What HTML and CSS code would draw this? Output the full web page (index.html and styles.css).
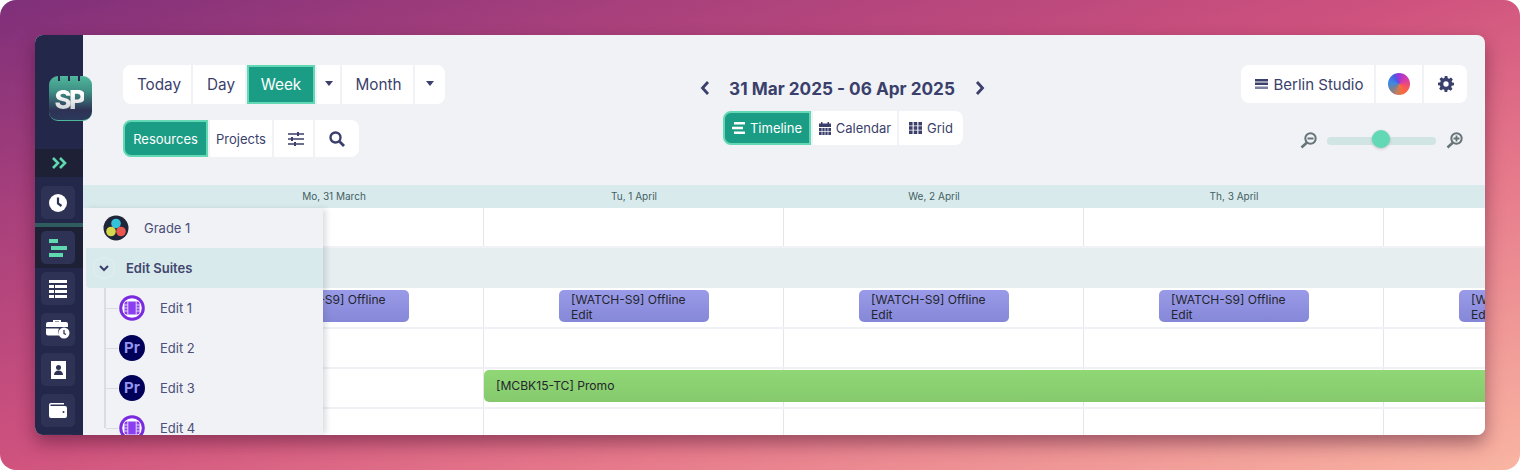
FILE: index.html
```html
<!DOCTYPE html>
<html lang="en">
<head>
<meta charset="utf-8">
<title>Schedule</title>
<link rel="stylesheet" href="styles.css">
</head>
<body>
<div class="stage">
<div class="app">
  <aside class="side">
    <div class="logo"><span class="rings"><i></i><i></i><i></i></span><span class="logo-text">SP</span></div>
    <div class="expand"><svg width="16" height="14" viewBox="0 0 16 14"><path d="M2 2l5 5-5 5M9 2l5 5-5 5" fill="none" stroke="#5fd8b0" stroke-width="2.6"/></svg></div>
    <div class="nav-first"><div class="nav"><svg width="20" height="20" viewBox="0 0 20 20"><circle cx="10" cy="10" r="9" fill="#fff"/><path d="M10 4.5V10.5L13.5 13" fill="none" stroke="#2e3255" stroke-width="2.2"/></svg></div></div>
    <div class="sep"></div>
    <div class="nav-active"><div class="nav"><svg width="20" height="18" viewBox="0 0 20 18"><rect x="1" y="0" width="9" height="4" fill="#5fd8b0"/><rect x="3" y="7" width="16" height="4" fill="#5fd8b0"/><rect x="1" y="14" width="14" height="4" fill="#5fd8b0"/></svg></div></div>
    <div class="nav-list">
      <div class="nav"><svg width="20" height="18" viewBox="0 0 20 18"><path d="M1 0h18v3H1zM1 5h5v3H1zM7 5h12v3H7zM1 10h5v3H1zM7 10h12v3H7zM1 15h5v3H1zM7 15h12v3H7z" fill="#fff"/></svg></div>
      <div class="nav"><svg width="24" height="20" viewBox="0 0 24 20"><path d="M7 3V1h8v2h5a2 2 0 0 1 2 2v3H0V5a2 2 0 0 1 2-2zM9 3h4V2.500H9zM0 9.500h13a7 7 0 0 0 .5 7H2a2 2 0 0 1-2-2z" fill="#fff"/><circle cx="18" cy="14" r="5.500" fill="#fff"/><path d="M18 11v3.500l2 1" fill="none" stroke="#2e3255" stroke-width="1.300"/></svg></div>
      <div class="nav"><svg width="15" height="18" viewBox="0 0 15 18"><path d="M0 0h15v18H0z" fill="#fff"/><circle cx="7.500" cy="6.500" r="2.500" fill="#2e3255"/><path d="M3 14c0-3 2-4.500 4.500-4.500S12 11 12 14z" fill="#2e3255"/></svg></div>
      <div class="nav"><svg width="18" height="16" viewBox="0 0 18 16"><path d="M2 1h13v1.500H2a.7.7 0 0 0 0 1.500h14a2 2 0 0 1 2 2v8a2 2 0 0 1-2 2H2a2 2 0 0 1-2-2V3a2 2 0 0 1 2-2z" fill="#fff"/><circle cx="14.500" cy="10" r="1" fill="#2e3255"/></svg></div>
      <div class="nav"></div>
    </div>
  </aside>

  <main class="main">
    <header class="top">
      <div class="top-left">
        <div class="btns row-a">
          <button class="b b-today">Today</button>
          <button class="b b-day">Day</button>
          <button class="b b-week on">Week</button>
          <button class="b b-caret"><span class="caret"></span></button>
          <button class="b b-month">Month</button>
          <button class="b b-caret2"><span class="caret"></span></button>
        </div>
        <div class="btns row-b">
          <button class="b b-res on">Resources</button>
          <button class="b b-proj">Projects</button>
          <button class="b b-filter"><svg width="16" height="14" viewBox="0 0 16 14"><path d="M0 2h16M0 7h16M0 12h16" stroke="#3b3f6b" stroke-width="1.500"/><path d="M10 0v4M4 5v4M7 10v4" stroke="#3b3f6b" stroke-width="2"/></svg></button>
          <button class="b b-search"><svg width="16" height="16" viewBox="0 0 16 16"><circle cx="6.500" cy="6.500" r="5" fill="none" stroke="#3b3f6b" stroke-width="2.400"/><path d="M10.500 10.500L15 15" stroke="#3b3f6b" stroke-width="2.800"/></svg></button>
        </div>
      </div>
      <div class="top-center">
        <div class="date-row">
          <svg width="10" height="16" viewBox="0 0 10 16"><path d="M8 2L2.500 8 8 14" fill="none" stroke="#3b3f6b" stroke-width="2.800"/></svg>
          <span class="date">31 Mar 2025 - 06 Apr 2025</span>
          <svg width="10" height="16" viewBox="0 0 10 16"><path d="M2 2l5.500 6L2 14" fill="none" stroke="#3b3f6b" stroke-width="2.800"/></svg>
        </div>
        <div class="btns row-c">
          <button class="b b-time on"><svg width="13" height="12" viewBox="0 0 13 12"><path d="M2 0h11v2.400H2zM0 4.800h11v2.400H0zM2 9.600h11V12H2z" fill="#fff"/></svg>Timeline</button>
          <button class="b b-cal"><svg width="12" height="13" viewBox="0 0 12 13"><path d="M2 0h1.500v1.500h5V0H10v1.500h2V5H0V1.500h2zM0 6h12v7H0z" fill="#3b3f6b"/><path d="M3 6v7M6 6v7M9 6v7M0 9.500h12" stroke="#fff" stroke-width=".7"/></svg>Calendar</button>
          <button class="b b-grid"><svg width="13" height="12" viewBox="0 0 13 12"><path d="M0 0h3.600v3.500H0zM4.700 0h3.600v3.500H4.700zM9.400 0H13v3.500H9.400zM0 4.300h3.600v3.400H0zM4.700 4.300h3.600v3.400H4.700zM9.400 4.300H13v3.400H9.400zM0 8.500h3.600V12H0zM4.700 8.500h3.600V12H4.700zM9.400 8.500H13V12H9.400z" fill="#3b3f6b"/></svg>Grid</button>
        </div>
      </div>
      <div class="top-right">
        <div class="btns row-d">
          <button class="b b-studio"><svg width="13" height="10" viewBox="0 0 13 10"><path d="M0 0h13v2.400H0zM0 3.500h13v2.400H0z" fill="#3b3f6b"/><path d="M0 7.500h13v2.400H0z" fill="#7b7fa0"/></svg>Berlin Studio</button>
          <button class="b b-color"><span class="wheel"></span></button>
          <button class="b b-gear"><svg width="16" height="16" viewBox="0 0 24 24"><path fill-rule="evenodd" fill="#3b3f6b" d="M10 0h4l.7 3.400 1.900.8 2.900-1.900 2.800 2.800-1.900 2.900.8 1.900L24 10v4l-3.400.7-.8 1.900 1.900 2.900-2.800 2.800-2.900-1.900-1.900.8L14 24h-4l-.7-3.400-1.900-.8-2.900 1.900-2.800-2.800 1.900-2.900-.8-1.900L0 14v-4l3.400-.7.8-1.900-1.900-2.900 2.800-2.800 2.900 1.900 1.900-.8zM12 8a4 4 0 1 0 0 8 4 4 0 0 0 0-8z"/></svg></button>
        </div>
        <div class="zoom">
          <svg width="17" height="17" viewBox="0 0 17 17"><circle cx="10.500" cy="6.500" r="5.200" fill="none" stroke="#66757a" stroke-width="2"/><path d="M7.500 6.500h6" stroke="#66757a" stroke-width="1.800"/><path d="M7 10.500L1.500 15.500" stroke="#66757a" stroke-width="2.600"/></svg>
          <div class="track"><span class="thumb"></span></div>
          <svg width="17" height="17" viewBox="0 0 17 17"><circle cx="10.500" cy="6.500" r="5.200" fill="none" stroke="#66757a" stroke-width="2"/><path d="M7.500 6.500h6M10.500 3.500v6" stroke="#66757a" stroke-width="1.800"/><path d="M7 10.500L1.500 15.500" stroke="#66757a" stroke-width="2.600"/></svg>
        </div>
      </div>
    </header>

    <section class="timeline">
      <div class="days">
        <div class="day">Mo, 31 March</div>
        <div class="day">Tu, 1 April</div>
        <div class="day">We, 2 April</div>
        <div class="day">Th, 3 April</div>
        <div class="day">Fr, 4 April</div>
      </div>
      <div class="row"><i></i><i></i><i></i><i></i><i></i></div>
      <div class="row group"></div>
      <div class="row tall">
        <i></i><i></i><i></i><i></i><i></i>
        <div class="ev purple ev1">[WATCH-S9] Offline Edit</div>
        <div class="ev purple ev2">[WATCH-S9] Offline Edit</div>
        <div class="ev purple ev3">[WATCH-S9] Offline Edit</div>
        <div class="ev purple ev4">[WATCH-S9] Offline Edit</div>
        <div class="ev purple ev5">[WATCH-S9] Offline Edit</div>
      </div>
      <div class="row"><i></i><i></i><i></i><i></i><i></i></div>
      <div class="row"><i></i><i></i><i></i><i></i><i></i><div class="ev green">[MCBK15-TC] Promo</div></div>
      <div class="row"><i></i><i></i><i></i><i></i><i></i></div>

      <div class="panel">
        <div class="res res-top">
          <span class="ico"><svg width="26" height="26" viewBox="0 0 26 26"><circle cx="13" cy="13" r="12.500" fill="#20263a"/><circle cx="13" cy="8.500" r="4.800" fill="#35c3dc"/><circle cx="8" cy="16.500" r="4.800" fill="#d5d84a"/><circle cx="18" cy="16.500" r="4.800" fill="#e9574f"/></svg></span>
          <span>Grade 1</span>
        </div>
        <div class="res group-head">
          <span class="chev"><svg width="10" height="7" viewBox="0 0 10 7"><path d="M1 1l4 4 4-4" fill="none" stroke="#3b3f6b" stroke-width="2"/></svg></span>
          <span>Edit Suites</span>
        </div>
        <div class="tree">
          <div class="res child"><span class="ico"><svg width="26" height="26" viewBox="0 0 26 26"><circle cx="13" cy="13" r="11.300" fill="#fff" stroke="#7a2be0" stroke-width="3"/><rect x="5.500" y="6.500" width="15" height="13" rx="2" fill="#8a3ff0"/><path d="M8.800 6.500v13M17.200 6.500v13M5.500 10h3.300M5.500 13h3.300M5.500 16h3.300M17.200 10h3.300M17.200 13h3.300M17.200 16h3.300" stroke="#f1e6fd" stroke-width=".9"/></svg></span><span>Edit 1</span></div>
          <div class="res child"><span class="ico pr">Pr</span><span>Edit 2</span></div>
          <div class="res child"><span class="ico pr">Pr</span><span>Edit 3</span></div>
          <div class="res child"><span class="ico"><svg width="26" height="26" viewBox="0 0 26 26"><circle cx="13" cy="13" r="11.300" fill="#fff" stroke="#7a2be0" stroke-width="3"/><rect x="5.500" y="6.500" width="15" height="13" rx="2" fill="#8a3ff0"/><path d="M8.800 6.500v13M17.200 6.500v13M5.500 10h3.300M5.500 13h3.300M5.500 16h3.300M17.200 10h3.300M17.200 13h3.300M17.200 16h3.300" stroke="#f1e6fd" stroke-width=".9"/></svg></span><span>Edit 4</span></div>
        </div>
      </div>
    </section>
  </main>
</div>
</div>
</body>
</html>
```

FILE: styles.css
```css
* { box-sizing: border-box; }
html, body { margin: 0; padding: 0; background: #fff; }
body { font-family: Inter, "Liberation Sans", sans-serif; width: 1520px; height: 470px; overflow: hidden; }
.stage {
  width: 1520px; height: 470px; padding: 35px; border-radius: 16px;
  background: linear-gradient(162deg, #7f2f7a 0%, #a8407c 22%, #cf527e 48%, #e5778a 68%, #f9b5a2 100%);
}
.app {
  width: 1450px; height: 400px; display: flex; overflow: hidden; border-radius: 8px;
  background: #f0f2f6; box-shadow: 0 8px 18px rgba(60, 10, 40, .45);
}

/* sidebar */
.side { width: 48px; flex: none; background: #23274a; display: flex; flex-direction: column; position: relative; z-index: 3; padding-top: 41px; }
.logo {
  position: relative; width: 43px; height: 45px; margin-left: 13.500px; flex: none; border-radius: 9px;
  background: linear-gradient(180deg, #4fb79b 0%, #3f8f85 35%, #2e3255 78%, #2b3a5a 100%);
  border-bottom: 1px solid #4fb79b; display: flex; align-items: center; justify-content: center;
}
.rings { position: absolute; top: -1px; left: 9px; display: flex; gap: 8px; }
.rings i { width: 2px; height: 6px; background: #23274a; display: block; }
.logo-text {
  font-weight: 800; font-size: 26px; letter-spacing: -2.500px; margin: 3px 2px 0 0;
  background: linear-gradient(180deg, #fff 30%, #bfc4c8 100%); -webkit-background-clip: text; background-clip: text; color: transparent;
}
.expand { height: 28px; margin-top: 28px; background: #1e2136; display: flex; align-items: center; justify-content: center; flex: none; }
.nav { width: 34px; height: 33px; border-radius: 5px; background: #2e3255; display: flex; align-items: center; justify-content: center; flex: none; }
.nav-first { padding: 9px 0 0 6px; }
.sep { height: 4px; background: #2f5d5f; margin-top: 4px; flex: none; }
.nav-active { padding: 4px 0 4px 6px; background: #1e2136; }
.nav-list { display: flex; flex-direction: column; gap: 7.500px; padding: 4px 0 0 6px; }

/* main */
.main { flex: 1; min-width: 0; display: flex; flex-direction: column; }
.top { height: 150px; flex: none; display: flex; justify-content: space-between; padding: 30px 18px 0 40px; }
.top-left { display: flex; flex-direction: column; gap: 16px; align-items: flex-start; }
.top-center { display: flex; flex-direction: column; align-items: center; margin-top: 11px; width: 287px; }
.top-right { display: flex; flex-direction: column; align-items: flex-end; }
.btns { display: flex; gap: 2px; border-radius: 8px; }
.b {
  border: 0; background: #fff; color: #3b3f6b; font: 400 15.300px Inter, "Liberation Sans", sans-serif;
  display: flex; align-items: center; justify-content: center; padding: 0; gap: 5px; white-space: nowrap;
}
.b:first-child { border-radius: 8px 0 0 8px; }
.b:last-child { border-radius: 0 8px 8px 0; }
.b.on { background: #1b9c85; color: #fff; border: 2px solid #63d8b4; }
.row-a { height: 39px; }
.b-today { width: 68px; padding-left: 4px; }
.b-day { width: 52px; padding-left: 4px; }
.b-week { width: 68px; }
.b-caret { width: 23px; }
.b-month { width: 71px; padding-left: 2px; }
.b-caret2 { width: 30px; }
.caret { width: 0; height: 0; border-left: 4.500px solid transparent; border-right: 4.500px solid transparent; border-top: 5px solid #3b3f6b; margin-top: -2px; }
.row-b { height: 37px; }
.row-b .b { font-size: 13px; }
.b-res { width: 85px; }
.b-proj { width: 62px; }
.b-filter { width: 39px; padding-left: 4px; }
.b-search { width: 44px; }

.date-row { display: flex; align-items: center; justify-content: space-between; width: 287px; height: 24px; padding: 0 2px 0 0; }
.date { font-weight: 700; font-size: 17.200px; color: #3b3f6b; }
.row-c { height: 34px; margin-top: 11px; }
.row-c .b { font-size: 13px; }
.b-time { width: 88px; }
.b-cal { width: 84px; }
.b-grid { width: 64px; }

.row-d { height: 38px; }
.b-studio { width: 133px; gap: 6px; padding-left: 3px; font-size: 15px; }
.b-color { width: 46px; }
.b-gear { width: 43px; }
.wheel {
  width: 22px; height: 22px; border-radius: 50%; display: block;
  background: conic-gradient(#9c35d8 0deg, #d13ab0 50deg, #f0506e 100deg, #ff6a3a 150deg, #c87c5c 190deg, #7a7f90 230deg, #3b8ae8 280deg, #4a5ae0 330deg, #9c35d8 360deg);
}
.zoom { display: flex; align-items: center; gap: 10px; margin-top: 29px; padding-right: 4px; }
.track {
  width: 109px; height: 8px; border-radius: 4px; position: relative;
  background: radial-gradient(circle, #c3dcd8 .6px, transparent .8px) 0 0 / 2px 2px, #dcecec;
}
.thumb { position: absolute; left: 44.500px; top: -6.500px; width: 18px; height: 18px; border-radius: 50%; background: #63d8b4; box-shadow: 0 1px 3px rgba(0, 0, 0, .2); }

/* timeline */
.timeline { flex: 1; position: relative; overflow: hidden; min-height: 0; background: #fff; }
.days { height: 23px; background: #d9eaec; display: flex; margin-left: 101px; box-shadow: -101px 0 0 #d9eaec; }
.day { width: 300px; flex: none; text-align: center; font-size: 10px; line-height: 23px; color: #3f5f62; }
.row { height: 40px; display: flex; margin-left: 101px; position: relative; border-bottom: 2px solid #f0f1f5; box-shadow: -101px 0 0 #fff; }
.row.tall { height: 41px; }
.row i { width: 300px; flex: none; border-right: 1px solid #e4e6ea; }
.row.group { background: #e6eef0; box-shadow: -101px 0 0 #e6eef0; border-bottom: 0; }
.ev { position: absolute; color: #23252e; font-size: 12.100px; line-height: 15px; padding: 2px 12px 0; overflow: hidden; }
.purple { top: 2px; width: 150px; height: 32px; border-radius: 5px; background: linear-gradient(180deg, #9a9be8, #8587d8); }
.ev1 { left: 75px; }
.ev2 { left: 375px; }
.ev3 { left: 675px; }
.ev4 { left: 975px; }
.ev5 { left: 1275px; }
.green { top: 1px; left: 300px; width: 1200px; height: 32px; border-radius: 5px; background: linear-gradient(180deg, #90d776, #85c96c); line-height: 28px; }

.panel {
  position: absolute; left: 0; top: 23px; width: 240px; bottom: 0; background: #f0f2f6;
  box-shadow: 4px 0 6px -1px rgba(70, 80, 100, .2); color: #4a4e78; font-size: 13px;
}
.res { display: flex; align-items: center; height: 40px; }
.res-top { padding-left: 20px; gap: 15px; }
.ico { width: 26px; height: 26px; flex: none; display: block; }
.ico svg { display: block; }
.group-head { margin-left: 3px; background: #d9eaec; font-weight: 600; color: #42466c; border-radius: 0 0 0 4px; padding-left: 7px; gap: 11px; }
.chev { width: 22px; height: 22px; border-radius: 50%; border: 1px solid #e4eef0; display: flex; align-items: center; justify-content: center; }
.tree { margin-left: 21px; border-left: 2px solid #d9dce2; height: 140px; overflow: visible; }
.child { position: relative; padding-left: 13px; gap: 15px; }
.child::before { content: ""; position: absolute; left: 0; top: 20px; width: 12px; height: 1px; background: #d9dce2; }
.pr { border-radius: 50%; background: #00005b; color: #9494ec; font-weight: 700; font-size: 15px; line-height: 26px; text-align: center; }
```
